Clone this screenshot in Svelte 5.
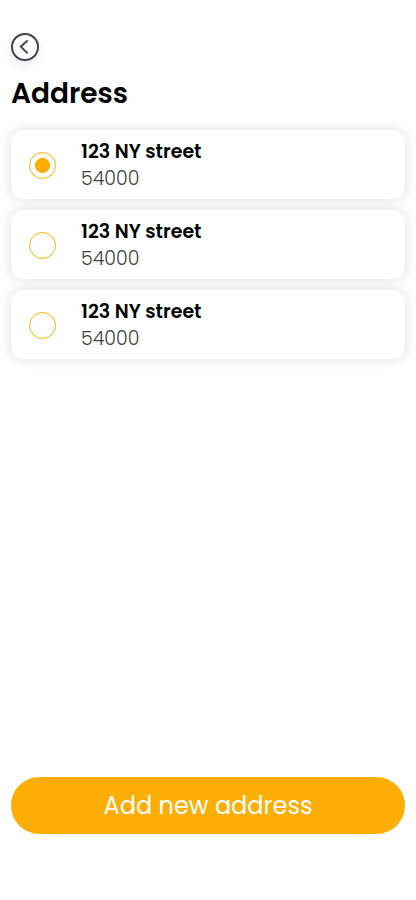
<script>
    let addresses = [
        { id: 1, street: "123 NY street", zip: "54000" },
        { id: 2, street: "123 NY street", zip: "54000" },
        { id: 3, street: "123 NY street", zip: "54000" },
    ];
    let selected = 1;
</script>

<main>
    <button class="back" type="button" aria-label="Back">
        <svg viewBox="0 0 28 28" fill="none" stroke="#434347" stroke-width="2">
            <circle cx="14" cy="14" r="13" />
            <path d="M16.6 7.4 L9.8 13.6 L16.6 20.4" />
        </svg>
    </button>
    <h1>Address</h1>
    <div class="list" role="radiogroup" aria-label="Address">
        {#each addresses as address (address.id)}
            <label class="card">
                <input type="radio" name="address" value={address.id} bind:group={selected} />
                <span class="text">
                    <span class="street">{address.street}</span>
                    <span class="zip">{address.zip}</span>
                </span>
            </label>
        {/each}
    </div>
    <button class="add" type="button">Add new address</button>
</main>

<style>
    :global(body) {
        background: #fff;
    }
    main {
        box-sizing: border-box;
        min-height: 100vh;
        padding: 33px 11px 66px;
        display: flex;
        flex-direction: column;
        font-family: Poppins, Inter, "Open Sans", sans-serif;
        color: #000;
    }
    button {
        border: 0;
        font-family: inherit;
        cursor: pointer;
    }
    .back {
        width: 28px;
        height: 28px;
        padding: 0;
        border-radius: 50%;
        background: #fff;
        box-shadow: 0 4px 8px rgba(0, 0, 0, 0.08);
    }
    .back svg {
        display: block;
    }
    h1 {
        margin: 13px 0 16px;
        font-size: 28px;
        line-height: 40px;
        font-weight: 600;
    }
    .list {
        display: grid;
        gap: 11px;
    }
    .card {
        display: flex;
        align-items: center;
        gap: 25px;
        padding: 8px 18px 7px;
        border-radius: 12px;
        background: #fff;
        box-shadow: 0 0 12px rgba(0, 0, 0, 0.14);
        cursor: pointer;
    }
    input {
        appearance: none;
        flex: none;
        width: 27px;
        height: 27px;
        margin: 0;
        border: 1px solid #fcae05;
        border-radius: 50%;
        background: #fff;
    }
    input:checked {
        background: radial-gradient(circle, #fcae05 7px, #fff 8px);
    }
    .text {
        display: grid;
        font-size: 19px;
        line-height: 27px;
    }
    .street {
        font-weight: 600;
    }
    .zip {
        color: #404040;
        font-weight: 300;
    }
    .add {
        margin-top: auto;
        padding: 9px 20px;
        border-radius: 29px;
        background: #fcae05;
        color: #fff;
        font-size: 24px;
        line-height: 39px;
    }
</style>
